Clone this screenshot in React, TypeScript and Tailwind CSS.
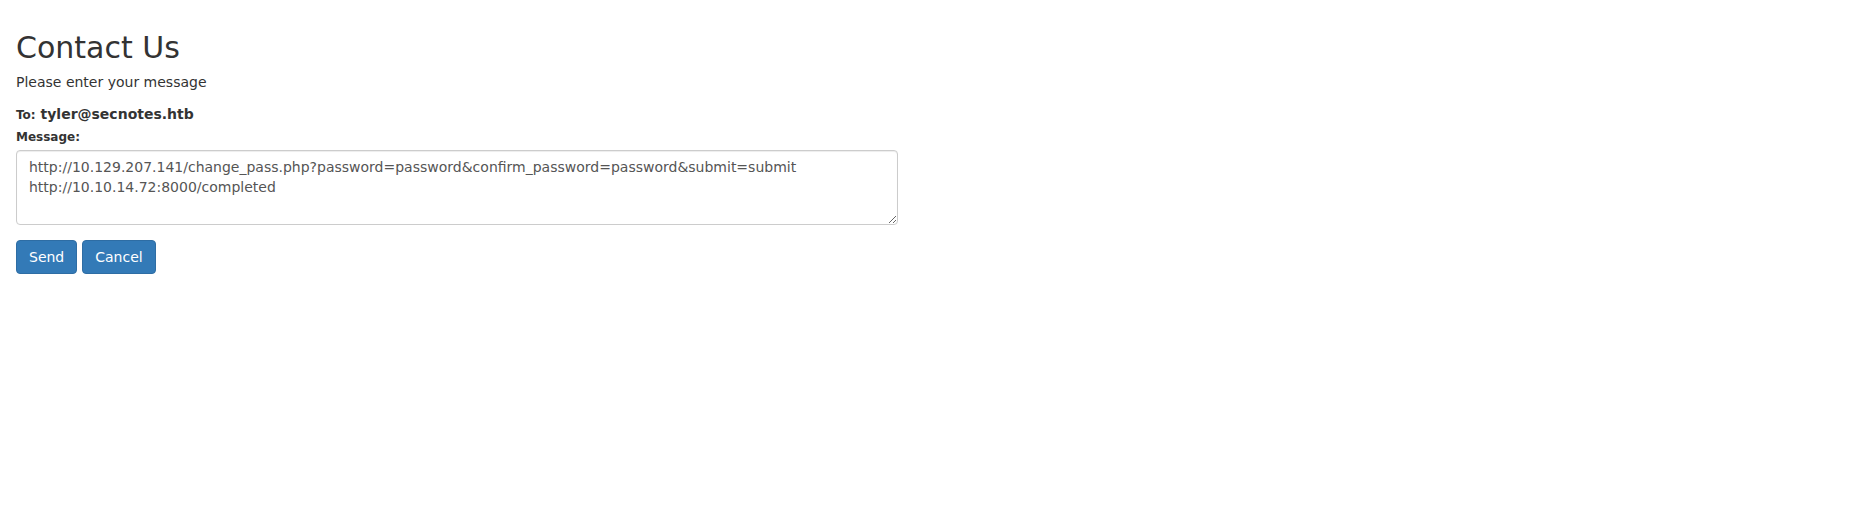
import React from "react";

const message =
  "http://10.129.207.141/change_pass.php?password=password&confirm_password=password&submit=submit\nhttp://10.10.14.72:8000/completed";

export default function App() {
  return (
    <div className="min-h-screen bg-white px-[16px] pt-[31px] text-[14px] leading-[20px] text-[#333] font-['DejaVu_Sans',sans-serif]">
      <h2 className="text-[30px] leading-[33px] font-medium">Contact Us</h2>
      <p className="mt-[8px]">Please enter your message</p>

      <form onSubmit={(e) => e.preventDefault()}>
        <div className="mt-[12px] font-bold">
          <span className="text-[12px]">To:</span> <span>tyler@secnotes.htb</span>
        </div>

        <label className="mt-[2px] block text-[12px] font-bold">Message:</label>
        <textarea
          rows={3}
          readOnly
          value={message}
          className="mt-[3px] block w-[882px] h-[75px] rounded-[4px] border border-[#ccc] bg-white px-[12px] py-[6px] text-[14px] leading-[20px] text-[#555] shadow-[inset_0_1px_1px_rgba(0,0,0,0.075)] outline-none"
        />

        <div className="mt-[15px] flex gap-[5px]">
          <button
            type="submit"
            className="h-[34px] rounded-[4px] border border-[#2e6da4] bg-[#337ab7] px-[12px] text-[14px] text-white"
          >
            Send
          </button>
          <button
            type="button"
            className="h-[34px] rounded-[4px] border border-[#2e6da4] bg-[#337ab7] px-[12px] text-[14px] text-white"
          >
            Cancel
          </button>
        </div>
      </form>
    </div>
  );
}
